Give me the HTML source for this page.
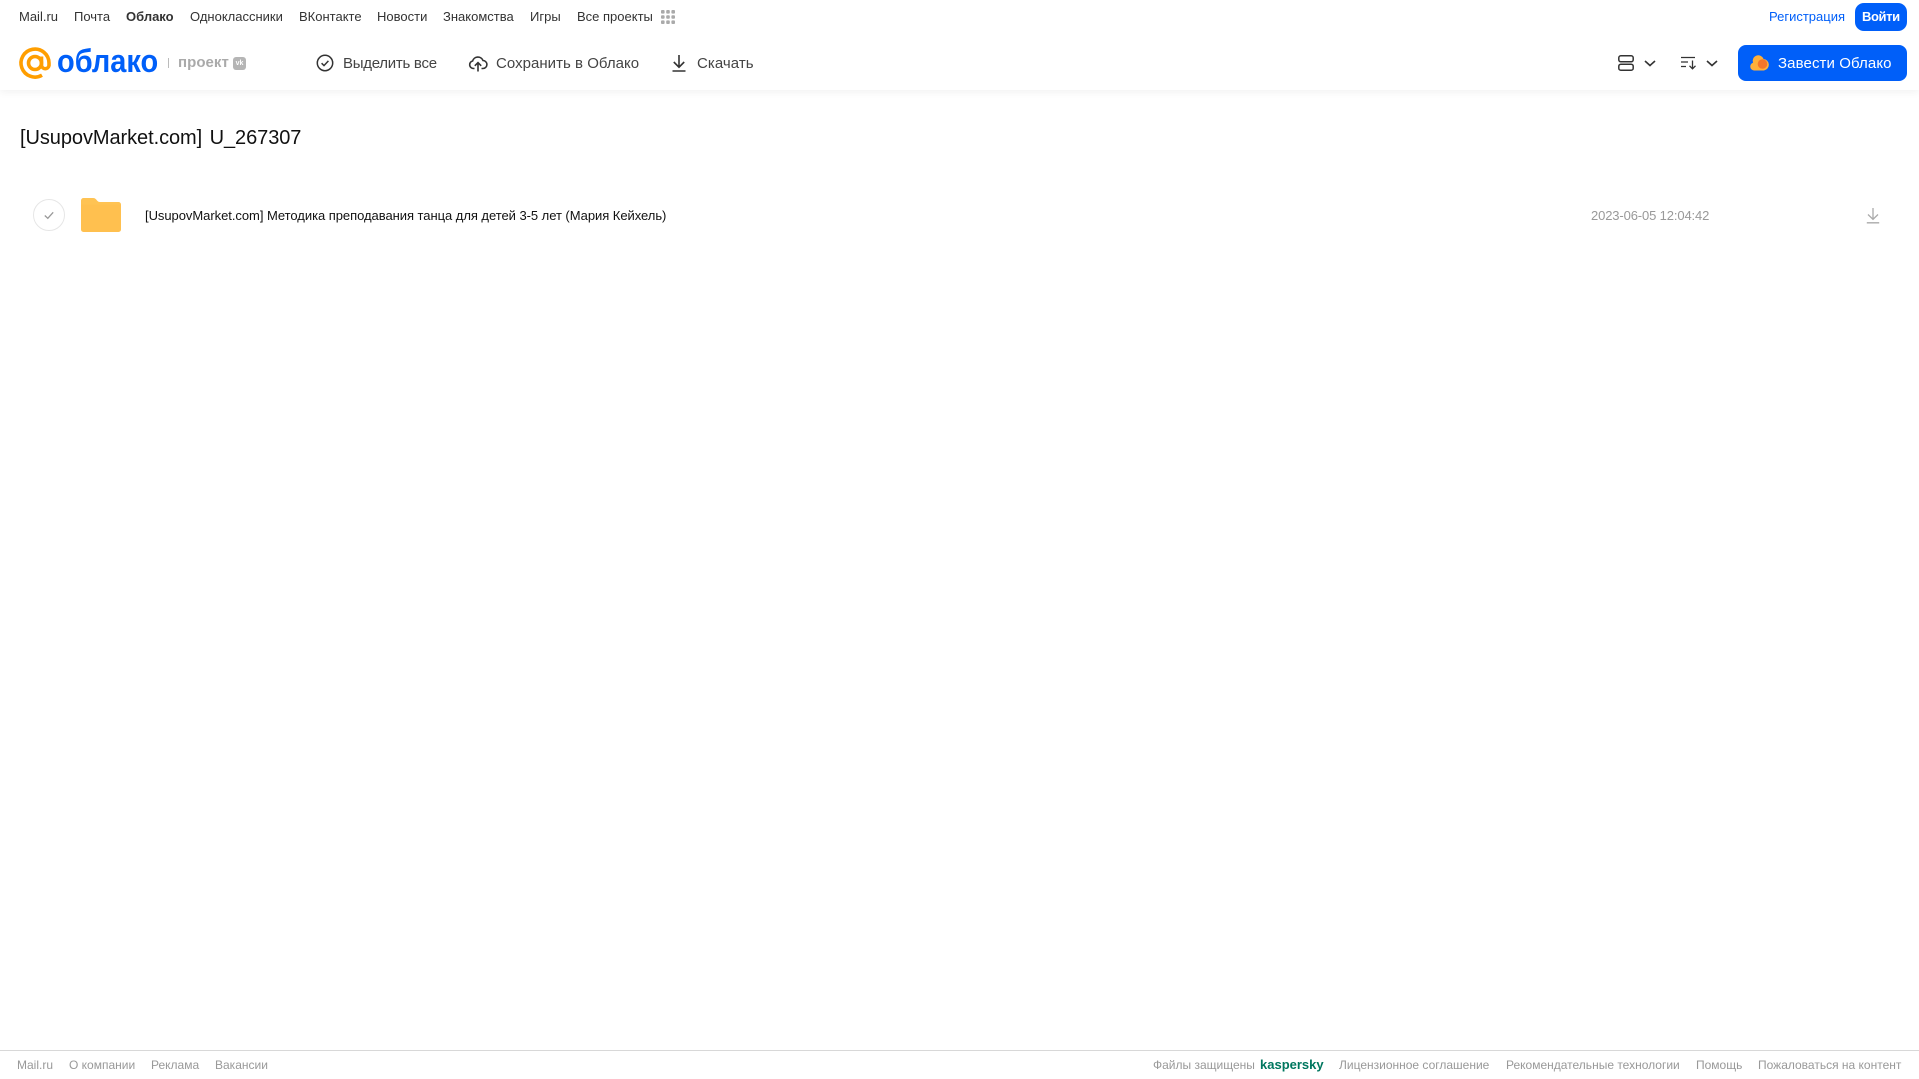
<!DOCTYPE html>
<html lang="ru"><head><meta charset="utf-8"><title>Облако</title>
<style>
html,body{margin:0;padding:0;background:#fff;width:1919px;height:1079px;overflow:hidden}
body{position:relative;font-family:"Liberation Sans",Arial,sans-serif;color:#333}
.t{position:absolute;white-space:nowrap;line-height:20px}
svg{position:absolute;overflow:visible}
.n{font-size:13px;top:7px;color:#333}
.b{font-size:15px;top:54px;color:#444}
.f{font-size:12px;top:1055px;color:#999}
#hdr{position:absolute;left:0;top:0;width:1919px;height:90px;background:#fff;box-shadow:0 2px 8px rgba(0,0,0,.06)}
</style></head><body>
<div id="hdr"></div>
<span class="t n" style="left:19px">Mail.ru</span>
<span class="t n" style="left:74px">Почта</span>
<span class="t n" style="left:126px;font-weight:bold">Облако</span>
<span class="t n" style="left:190px">Одноклассники</span>
<span class="t n" style="left:299px">ВКонтакте</span>
<span class="t n" style="left:377px">Новости</span>
<span class="t n" style="left:443px">Знакомства</span>
<span class="t n" style="left:530px">Игры</span>
<span class="t n" style="left:577px">Все проекты</span>
<svg style="left:661px;top:10px" width="14" height="14" fill="#aaa"><rect x="0" y="0" width="3.6" height="3.6" rx="1"/><rect x="5.2" y="0" width="3.6" height="3.6" rx="1"/><rect x="10.4" y="0" width="3.6" height="3.6" rx="1"/><rect x="0" y="5.2" width="3.6" height="3.6" rx="1"/><rect x="5.2" y="5.2" width="3.6" height="3.6" rx="1"/><rect x="10.4" y="5.2" width="3.6" height="3.6" rx="1"/><rect x="0" y="10.4" width="3.6" height="3.6" rx="1"/><rect x="5.2" y="10.4" width="3.6" height="3.6" rx="1"/><rect x="10.4" y="10.4" width="3.6" height="3.6" rx="1"/></svg>

<svg style="left:19px;top:47px" width="33" height="33" viewBox="0 0 33 33" fill="none" stroke="#ff9e00" stroke-width="3.6"><circle cx="16" cy="16" r="6.5"/><path d="M22.500 9.500V18.500a3.800 3.800 0 0 0 7.500 0V16A14 14 0 1 0 23 28.200"/></svg>
<span class="t" style="left:57px;top:43px;line-height:36px;font-size:32px;font-weight:bold;color:#005ff9;transform:scaleX(.905);transform-origin:0 50%">облако</span>
<div style="position:absolute;left:168px;top:58px;width:1px;height:10px;background:#bbb"></div>
<span class="t" style="left:178px;top:53px;font-size:15px;font-weight:bold;color:#aaa;letter-spacing:.05px">проект</span>
<div style="position:absolute;left:233px;top:57px;width:13px;height:13px;border-radius:3px;background:#b5b5b5;color:#fff;font:bold 7px/13px 'Liberation Sans',sans-serif;text-align:center">vk</div>

<svg style="left:316px;top:54px" width="18" height="18" viewBox="0 0 18 18" fill="none" stroke="#333" stroke-width="1.5"><circle cx="9" cy="9" r="7.7"/><path d="M5.600 9.200l2.400 2.400 4.400-4.700"/></svg>
<span class="t b" style="left:343px;letter-spacing:-.27px">Выделить все</span>
<svg style="left:469px;top:54px" width="18" height="18" viewBox="0 0 18 18" fill="none" stroke="#333" stroke-width="1.6"><path d="M5.500 14.500H4.500A3.800 3.800 0 0 1 3.600 7A5.500 5.500 0 0 1 14 6.500 4 4 0 0 1 13.800 14.500H12.500"/><path d="M9 17.500V9M5.800 11.800L9 8.600l3.200 3.200"/></svg>
<span class="t b" style="left:496px;letter-spacing:.03px">Сохранить в Облако</span>
<svg style="left:671px;top:54px" width="16" height="18" viewBox="0 0 16 18" fill="none" stroke="#333" stroke-width="1.6"><path d="M8 1V13M2.800 8L8 13.200 13.200 8M1.500 17H14.500"/></svg>
<span class="t b" style="left:697px;letter-spacing:.05px">Скачать</span>

<svg style="left:1618px;top:55px" width="16" height="16" viewBox="0 0 16 16" fill="none" stroke="#333" stroke-width="1.5"><rect x=".8" y=".8" width="14.400" height="6" rx="2"/><rect x=".8" y="9.200" width="14.400" height="6" rx="2"/></svg>
<svg style="left:1644px;top:60px" width="12" height="7" viewBox="0 0 12 7" fill="none" stroke="#333" stroke-width="1.6"><path d="M1 1l5 4.500L11 1"/></svg>
<svg style="left:1681px;top:56px" width="16" height="14" viewBox="0 0 16 14" fill="none" stroke="#333" stroke-width="1.300"><path d="M0 1.500H14M0 6H7M0 10.500H5M11.500 4.500V12.500M8.500 9.800l3 3 3-3"/></svg>
<svg style="left:1706px;top:60px" width="12" height="7" viewBox="0 0 12 7" fill="none" stroke="#333" stroke-width="1.6"><path d="M1 1l5 4.500L11 1"/></svg>

<span class="t" style="left:1769px;top:7px;font-size:13px;color:#005ff9">Регистрация</span>
<div style="position:absolute;left:1855px;top:3px;width:52px;height:28px;border-radius:9px;background:#005ff9"></div>
<span class="t" style="left:1862px;top:7px;font-size:13px;color:#fff;font-weight:bold;letter-spacing:-.4px">Войти</span>
<div style="position:absolute;left:1738px;top:45px;width:169px;height:36px;border-radius:8px;background:#005ff9"></div>
<svg style="left:1750px;top:54px" width="20" height="17" viewBox="0 0 20 17"><path fill="#ffb03a" d="M4 16.500A4 4 0 0 1 3 8.700 5.500 5.500 0 0 1 13.500 5 5.800 5.800 0 0 1 14 16.500Z"/><circle cx="12.500" cy="10" r="4.800" fill="#f5762a"/></svg>
<span class="t" style="left:1778px;top:54px;font-size:15px;color:#fff;letter-spacing:.1px">Завести Облако</span>

<span class="t" style="left:20px;top:126px;line-height:24px;font-size:20px;color:#111;word-spacing:2px;letter-spacing:-.07px">[UsupovMarket.com] U_267307</span>

<svg style="left:33px;top:199px" width="32" height="32" viewBox="0 0 32 32" fill="none"><circle cx="16" cy="16" r="15.500" stroke="#e6e6e6"/><path d="M11.800 16.500l3 2.800 5.400-6" stroke="#999" stroke-width="1.300"/></svg>
<svg style="left:81px;top:198px" width="40" height="34" viewBox="0 0 40 34"><path fill="#ffc353" d="M0 2.500A2.500 2.500 0 0 1 2.500 0H12c2 0 3 1 4 2.500 1 1 1.500 1.500 3 1.500H37.500A2.500 2.500 0 0 1 40 6.500V10H0Z"/><path fill="#ffc04f" d="M0 6.500H40V31.500A2.500 2.500 0 0 1 37.500 34H2.500A2.500 2.500 0 0 1 0 31.500Z"/></svg>
<span class="t" style="left:145px;top:206px;font-size:13px;color:#111;letter-spacing:-.045px">[UsupovMarket.com] Методика преподавания танца для детей 3-5 лет (Мария Кейхель)</span>
<span class="t" style="left:1591px;top:206px;font-size:13px;color:#999;letter-spacing:-.13px">2023-06-05 12:04:42</span>
<svg style="left:1866px;top:207px" width="14" height="17" viewBox="0 0 14 17" fill="none" stroke="#aaa" stroke-width="1.300"><path d="M7 1V12M2 7.500L7 12.300 12 7.500M.8 15.800H13.200"/></svg>

<div style="position:absolute;left:0;top:1050px;width:1919px;height:1px;background:#d8d8d8"></div>
<span class="t f" style="left:17px">Mail.ru</span>
<span class="t f" style="left:69px">О компании</span>
<span class="t f" style="left:151px">Реклама</span>
<span class="t f" style="left:215px">Вакансии</span>
<span class="t f" style="left:1153px">Файлы защищены</span>
<span class="t f" style="left:1260px;font-size:13px;font-weight:bold;color:#00775f">kaspersky</span>
<span class="t f" style="left:1339px">Лицензионное соглашение</span>
<span class="t f" style="left:1506px">Рекомендательные технологии</span>
<span class="t f" style="left:1696px">Помощь</span>
<span class="t f" style="left:1758px">Пожаловаться на контент</span>
</body></html>
